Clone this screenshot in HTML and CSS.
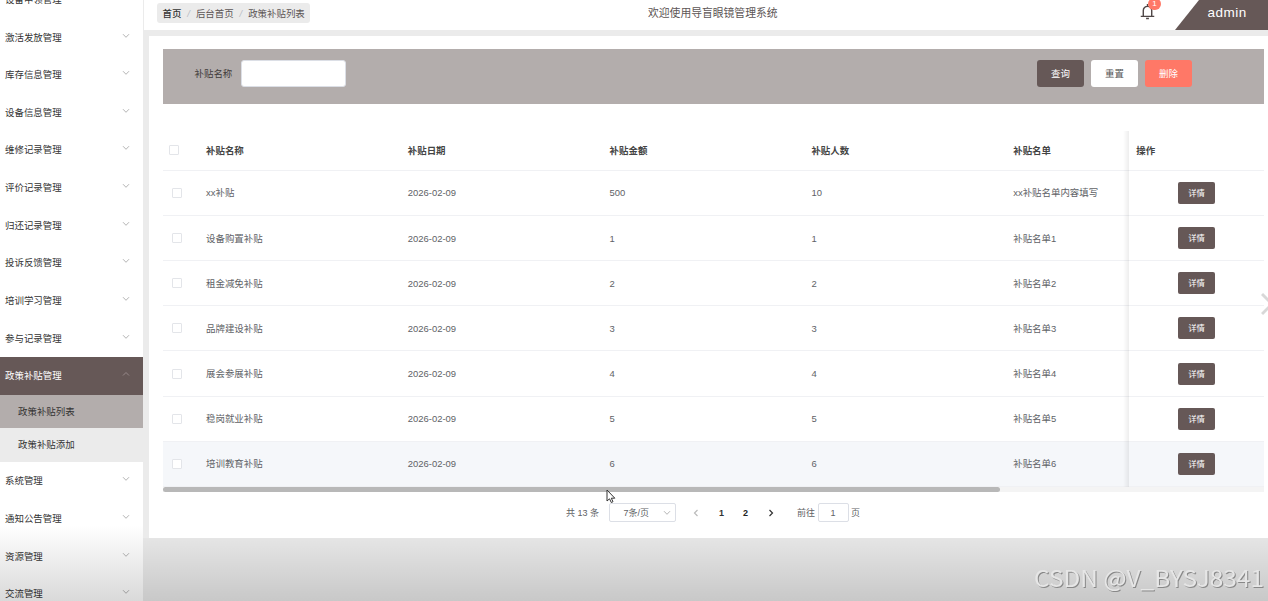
FILE: index.html
```
<!DOCTYPE html>
<html lang="zh-CN">
<head>
<meta charset="utf-8">
<title>导盲眼镜管理系统</title>
<link rel="stylesheet" href="styles.css">
</head>
<body>
<svg class="defs" aria-hidden="true">
  <symbol id="down" viewBox="0 0 8 8"><path d="M1 2.2 L4 5.3 L7 2.2" fill="none" stroke="currentColor"/></symbol>
  <symbol id="up" viewBox="0 0 8 8"><path d="M1 5.5 L4 2.5 L7 5.5" fill="none" stroke="currentColor"/></symbol>
</svg>
<div class="app">
  <aside class="sidebar">
    <div class="item"><span>设备申领管理</span><svg class="arrow"><use href="#down"/></svg></div>
    <div class="item"><span>激活发放管理</span><svg class="arrow"><use href="#down"/></svg></div>
    <div class="item"><span>库存信息管理</span><svg class="arrow"><use href="#down"/></svg></div>
    <div class="item"><span>设备信息管理</span><svg class="arrow"><use href="#down"/></svg></div>
    <div class="item"><span>维修记录管理</span><svg class="arrow"><use href="#down"/></svg></div>
    <div class="item"><span>评价记录管理</span><svg class="arrow"><use href="#down"/></svg></div>
    <div class="item"><span>归还记录管理</span><svg class="arrow"><use href="#down"/></svg></div>
    <div class="item"><span>投诉反馈管理</span><svg class="arrow"><use href="#down"/></svg></div>
    <div class="item"><span>培训学习管理</span><svg class="arrow"><use href="#down"/></svg></div>
    <div class="item"><span>参与记录管理</span><svg class="arrow"><use href="#down"/></svg></div>
    <div class="item open"><span>政策补贴管理</span><svg class="arrow"><use href="#up"/></svg></div>
    <div class="sub current">政策补贴列表</div>
    <div class="sub">政策补贴添加</div>
    <div class="item"><span>系统管理</span><svg class="arrow"><use href="#down"/></svg></div>
    <div class="item"><span>通知公告管理</span><svg class="arrow"><use href="#down"/></svg></div>
    <div class="item"><span>资源管理</span><svg class="arrow"><use href="#down"/></svg></div>
    <div class="item"><span>交流管理</span><svg class="arrow"><use href="#down"/></svg></div>
  </aside>
  <div class="main">
    <header class="topbar">
      <nav class="crumbs"><b>首页</b><i>/</i><span>后台首页</span><i>/</i><span>政策补贴列表</span></nav>
      <div class="welcome">欢迎使用导盲眼镜管理系统</div>
      <div class="bell">
        <svg class="bell-icon" viewBox="0 0 16 18" fill="none" stroke="#4f4747" stroke-width="1.5"><path d="M8 1v2M3.5 14V8a4.5 4.5 0 0 1 9 0v6M.8 14.2h14.4M6.5 16.5h3"/></svg>
        <span class="badge">1</span>
      </div>
      <div class="user">admin</div>
    </header>
    <section class="card">
      <div class="search">
        <label class="label">补贴名称</label>
        <input class="input" type="text">
        <div class="actions">
          <button class="btn dark">查询</button><button class="btn plain">重置</button><button class="btn danger">删除</button>
        </div>
      </div>
      <div class="table">
        <div class="row head"><div class="check"><i class="box"></i></div><div>补贴名称</div><div>补贴日期</div><div>补贴金额</div><div>补贴人数</div><div>补贴名单</div><div class="op">操作</div></div>
        <div class="row"><div class="check"><i class="box"></i></div><div>xx补贴</div><div>2026-02-09</div><div>500</div><div>10</div><div>xx补贴名单内容填写</div><div class="op"><button class="detail">详情</button></div></div>
        <div class="row"><div class="check"><i class="box"></i></div><div>设备购置补贴</div><div>2026-02-09</div><div>1</div><div>1</div><div>补贴名单1</div><div class="op"><button class="detail">详情</button></div></div>
        <div class="row"><div class="check"><i class="box"></i></div><div>租金减免补贴</div><div>2026-02-09</div><div>2</div><div>2</div><div>补贴名单2</div><div class="op"><button class="detail">详情</button></div></div>
        <div class="row"><div class="check"><i class="box"></i></div><div>品牌建设补贴</div><div>2026-02-09</div><div>3</div><div>3</div><div>补贴名单3</div><div class="op"><button class="detail">详情</button></div></div>
        <div class="row"><div class="check"><i class="box"></i></div><div>展会参展补贴</div><div>2026-02-09</div><div>4</div><div>4</div><div>补贴名单4</div><div class="op"><button class="detail">详情</button></div></div>
        <div class="row"><div class="check"><i class="box"></i></div><div>稳岗就业补贴</div><div>2026-02-09</div><div>5</div><div>5</div><div>补贴名单5</div><div class="op"><button class="detail">详情</button></div></div>
        <div class="row hover"><div class="check"><i class="box"></i></div><div>培训教育补贴</div><div>2026-02-09</div><div>6</div><div>6</div><div>补贴名单6</div><div class="op"><button class="detail">详情</button></div></div>
      </div>
      <div class="track"><div class="thumb"></div></div>
      <div class="pager">
        <span class="total">共 13 条</span>
        <span class="size"><span>7条/页</span><svg class="arrow"><use href="#down"/></svg></span>
        <svg class="step off" viewBox="0 0 8 8"><path d="M5.5 1 L2.5 4 L5.5 7"/></svg>
        <b class="page">1</b><b class="page now">2</b>
        <svg class="step" viewBox="0 0 8 8"><path d="M2.5 1 L5.5 4 L2.5 7"/></svg>
        <span class="goto">前往</span><span class="jump">1</span><span class="unit">页</span>
      </div>
    </section>
  </div>
</div>
<div class="shade"></div>
<svg class="next" viewBox="0 0 8 24"><path d="M1 2 L11 12 L1 22" fill="none" stroke="#d8d8d8" stroke-width="3"/></svg>
<svg class="cursor" viewBox="0 0 10 15"><path d="M1 1 V12 L3.5 9.8 L5.3 13.5 L7 12.7 L5.3 9.2 H8.8 Z" fill="#fff" stroke="#333"/></svg>
<svg class="mark" viewBox="0 0 240 34"><text x="5" y="22" textLength="230" lengthAdjust="spacingAndGlyphs">CSDN @V_BYSJ8341</text></svg>
</body>
</html>
```
FILE: styles.css
```
* { box-sizing: border-box; }
body {
  margin: 0;
  width: 1268px;
  height: 601px;
  overflow: hidden;
  position: relative;
  background: #ebebeb;
  color: #606266;
  font: 9.45px/14px "Liberation Sans", "Noto Sans CJK SC", sans-serif;
}
button, input { font: inherit; border: 0; padding: 0; }
.defs { position: absolute; width: 0; height: 0; }
.app { display: flex; height: 601px; overflow: hidden; }

.sidebar {
  flex: none;
  width: 143px;
  height: 601px;
  display: flex;
  flex-direction: column;
  justify-content: flex-start;
  margin-top: -19.4px;
  color: #333;
}
.item {
  flex: none;
  height: 37.65px;
  padding: 1px 13.5px 0 5px;
  display: flex;
  align-items: center;
  justify-content: space-between;
  background: #fff;
}
.arrow { width: 8px; height: 8px; color: #aaa; stroke-width: .9; }
.item .arrow { margin-bottom: 4px; }
.item.open { background: #665857; color: #fff; }
.open .arrow { color: #9b8f8e; }
.sub { flex: none; height: 33.7px; padding-left: 18px; line-height: 34.6px; background: #ebebeb; }
.sub.current { background: #b3adac; }

.main { flex: 1; min-width: 0; display: flex; flex-direction: column; gap: 6px; }
.topbar {
  height: 30px;
  flex: none;
  margin-left: 1px;
  padding-left: 13px;
  display: flex;
  background: #fff;
}
.crumbs {
  width: 153px;
  height: 20px;
  margin: 3px 1px 0 0;
  padding: 1px 0 0 5.5px;
  display: flex;
  align-items: center;
  border-radius: 3px;
  background: #ebebeb;
  color: #5c5555;
  white-space: nowrap;
}
.crumbs b { font-weight: 500; color: #333; }
.crumbs i { width: 14.5px; text-align: center; color: #b8bcc4; }
.welcome { margin: 6px 0 0 337px; font-size: 10.8px; width: 491px; color: #5c5555; }
.bell { position: relative; width: 36px; }
.bell-icon { display: block; width: 15px; height: 17px; margin: 3px 0 0 1px; }
.badge {
  position: absolute;
  left: 9px;
  top: -2px;
  width: 13px;
  height: 12px;
  border-radius: 6px;
  background: #ff7867;
  color: #fff;
  font-size: 8px;
  line-height: 12px;
  text-align: center;
}
.user {
  width: 93px;
  background: #665857;
  clip-path: polygon(24px 0, 100% 0, 100% 100%, 0 100%);
  color: #fff;
  font-size: 13.5px;
  line-height: 26px;
  letter-spacing: .5px;
  padding-left: 32.5px;
}
.card {
  height: 502px;
  margin-left: 6px;
  padding: 13px 4px 0 13.5px;
  background: #fff;
}
.search {
  height: 55px;
  display: flex;
  align-items: flex-start;
  padding: 11px 72px 0 32px;
  background: #b3adac;
}
.label { width: 46px; line-height: 27px; color: #403a3a; }
.input { width: 105.5px; height: 27px; border-radius: 3px; background: #fff; border: 1px solid #dcdfe6; }
.actions { margin-left: auto; display: flex; gap: 7px; }
.btn { width: 47px; height: 27px; border-radius: 3px; color: #fff; }
.btn.dark, .detail { background: #665857; }
.btn.plain { background: #fff; color: #555; }
.btn.danger { background: #ff7867; }

.table { margin-top: 27px; overflow: hidden; }
.row {
  height: 45.15px;
  display: grid;
  grid-template-columns: 43.5px repeat(4, 201.8px) 116px 1fr;
  align-items: center;
  padding-top: 1px;
  border-bottom: 1px solid #f0f1f4;
}
.row.head { height: 39.9px; color: #444; font-weight: 700; }
.check { padding-left: 9px; margin-top: -1px; }
.head .check { padding-left: 6px; }
.box { display: block; width: 10px; height: 10px; border: 1px solid #e3e5e9; border-radius: 1px; background: #fff; }
.op {
  position: relative;
  align-self: stretch;
  display: flex;
  align-items: center;
  justify-content: center;
}
.op::before {
  content: "";
  position: absolute;
  inset: -1px auto -1px -6px;
  width: 6px;
  background: linear-gradient(90deg, rgba(0, 0, 0, 0), rgba(0, 0, 0, .07));
}
.head .op { justify-content: flex-start; padding-left: 7px; }
.detail { width: 37px; height: 22px; margin-bottom: 1px; border-radius: 2px; color: #fff; font-size: 8.3px; }
.hover { background: #f5f7fa; }
.track { height: 5px; background: #f4f4f4; }
.thumb { width: 837px; height: 5px; border-radius: 3px; background: #b8b8b8; }
.pager { display: flex; align-items: center; height: 19px; margin-top: 11.4px; padding-left: 403.5px; font-size: 9px; }
.total { width: 42.5px; white-space: nowrap; }
.size {
  width: 67.5px;
  height: 19px;
  padding: 0 4px 0 14px;
  display: flex;
  align-items: center;
  justify-content: space-between;
  border: 1px solid #dcdfe6;
  border-radius: 2px;
}
.step { width: 8px; height: 8px; fill: none; stroke: #333; stroke-width: 1.2; margin: 0 13.5px 0 16px; }
.step.off { stroke: #bbb; }
.page { width: 24px; text-align: center; color: #333; padding-right: 6px; }
.page + .page + .step { margin-left: 6.5px; margin-right: 22px; }
.off + .page { margin-left: -1px; }
.page.now { color: #222; }
.goto { width: 20.5px; }
.jump { width: 31px; height: 19px; line-height: 18px; text-align: center; border: 1px solid #dcdfe6; border-radius: 2px; }
.unit { margin-left: 2.5px; }

.shade { position: absolute; inset: 525px 0 0; background: linear-gradient(rgba(0, 0, 0, 0), rgba(0, 0, 0, .15)); clip-path: polygon(0 0, 143px 0, 143px 13px, 100% 13px, 100% 100%, 0 100%); }
.next { position: absolute; left: 1261px; top: 292px; width: 8px; height: 24px; }
.cursor { position: absolute; left: 605.5px; top: 488.5px; width: 10px; height: 15px; }
.mark {
  position: absolute;
  left: 1029px;
  top: 565px;
  width: 240px;
  height: 34px;
  font: 400 23.3px "Noto Sans CJK SC", sans-serif;
  fill: #e6e6e6;
  filter: drop-shadow(1px 1px .5px #888);
}
```
